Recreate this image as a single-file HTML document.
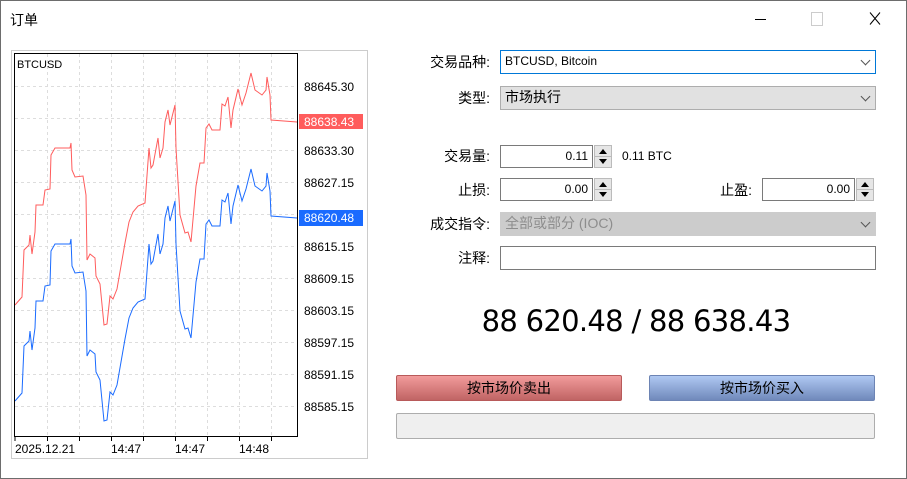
<!DOCTYPE html>
<html><head><meta charset="utf-8"><style>
body{margin:0;width:907px;height:479px;background:#fff;position:relative;overflow:hidden;font-family:"Liberation Sans","Noto Sans CJK SC",sans-serif;font-size:13px;color:#000}
.a{position:absolute}
.lbl{position:absolute;text-align:right;width:100px;font-size:14px}
.fld{position:absolute;box-sizing:border-box;border:1px solid #7a7a7a;background:#fff;font-size:12px;line-height:21px;padding:0 4px}
.num{text-align:right}
.dd::after{content:"";position:absolute;right:6px;top:6px;width:6px;height:6px;border-right:1px solid #555;border-bottom:1px solid #555;transform:rotate(45deg)}
.sp{position:absolute;width:18px;height:23px;box-sizing:border-box;border:1px solid #bbb;background:#e6e6e6}
.sp i{position:absolute;left:4px;width:0;height:0;border-left:4px solid transparent;border-right:4px solid transparent}
.sp .u{top:3px;border-bottom:5px solid #000}
.sp .d{bottom:3px;border-top:5px solid #000}
.sp b{position:absolute;left:0;right:0;top:10px;border-top:1px solid #bbb}
</style></head><body>
<div class="a" style="left:0;top:0;width:905px;height:477px;border:1px solid #6d6d6d"></div>
<div class="a" style="left:10px;top:10px;font-size:14px">订单</div>
<div class="a" style="left:755px;top:19px;width:11px;border-top:1px solid #000"></div>
<div class="a" style="left:811px;top:12px;width:10px;height:12px;border:1px solid #ccc"></div>
<svg class="a" style="left:869px;top:12px" width="12" height="13"><path d="M1 0.5L11 12.5M11 0.5L1 12.5" stroke="#000" stroke-width="1"/></svg>

<svg class="a" style="left:11px;top:50px" width="357" height="409">
<rect x="0.5" y="0.5" width="356" height="408" fill="#fff" stroke="#ccc"/>
<g stroke="#ddd" stroke-dasharray="3,3">
<line x1="4" y1="36.5" x2="286" y2="36.5"/><line x1="4" y1="68.5" x2="286" y2="68.5"/><line x1="4" y1="100.5" x2="286" y2="100.5"/><line x1="4" y1="132.5" x2="286" y2="132.5"/><line x1="4" y1="164.5" x2="286" y2="164.5"/><line x1="4" y1="196.5" x2="286" y2="196.5"/><line x1="4" y1="228.5" x2="286" y2="228.5"/><line x1="4" y1="260.5" x2="286" y2="260.5"/><line x1="4" y1="292.5" x2="286" y2="292.5"/><line x1="4" y1="324.5" x2="286" y2="324.5"/><line x1="4" y1="356.5" x2="286" y2="356.5"/>
<line x1="36.5" y1="4" x2="36.5" y2="386"/><line x1="68.5" y1="4" x2="68.5" y2="386"/><line x1="100.5" y1="4" x2="100.5" y2="386"/><line x1="132.5" y1="4" x2="132.5" y2="386"/><line x1="164.5" y1="4" x2="164.5" y2="386"/><line x1="196.5" y1="4" x2="196.5" y2="386"/><line x1="228.5" y1="4" x2="228.5" y2="386"/><line x1="260.5" y1="4" x2="260.5" y2="386"/>
</g>
<g transform="translate(-11,-50)" fill="none">
<polyline stroke="#ff5c5c" points="15,305 22,297 24,250 29,245 30,235 32,254 35,232 36,205 43,205 45,190 50,189 51,155 55,148 70,148 71,143 72,170 75,177 83,176 86,195 87,260 90,254 95,258 96,276 100,284 104,325 107,324 110,296 113,299 117,289 125,243 129,222 133,212 138,206 145,203 149,148 151,168 153,165 158,138 160,158 163,148 165,122 168,110 170,125 175,105 176,148 180,215 185,233 188,232 191,242 196,186 200,163 204,163 206,128 209,124 212,130 220,130 222,104 225,106 228,97 231,128 233,110 238,89 242,105 246,93 251,73 255,90 262,95 266,90 267,77 270,95 271,120 297,122"/>
<polyline stroke="#1a6bff" transform="translate(0,96)" points="15,305 22,297 24,250 29,245 30,235 32,254 35,232 36,205 43,205 45,190 50,189 51,155 55,148 70,148 71,143 72,170 75,177 83,176 86,195 87,260 90,254 95,258 96,276 100,284 104,325 107,324 110,296 113,299 117,289 125,243 129,222 133,212 138,206 145,203 149,148 151,168 153,165 158,138 160,158 163,148 165,122 168,110 170,125 175,105 176,148 180,215 185,233 188,232 191,242 196,186 200,163 204,163 206,128 209,124 212,130 220,130 222,104 225,106 228,97 231,128 233,110 238,89 242,105 246,93 251,73 255,90 262,95 266,90 267,77 270,95 271,120 297,122"/>
</g>
<rect x="3.5" y="3.5" width="283" height="383" fill="none" stroke="#000"/>
<g stroke="#000"><line x1="4" y1="387" x2="4" y2="391"/><line x1="36.5" y1="387" x2="36.5" y2="391"/><line x1="68.5" y1="387" x2="68.5" y2="391"/><line x1="100.5" y1="387" x2="100.5" y2="391"/><line x1="132.5" y1="387" x2="132.5" y2="391"/><line x1="164.5" y1="387" x2="164.5" y2="391"/><line x1="196.5" y1="387" x2="196.5" y2="391"/><line x1="228.5" y1="387" x2="228.5" y2="391"/><line x1="260.5" y1="387" x2="260.5" y2="391"/></g>
<g font-size="12" font-family="Liberation Sans, sans-serif" fill="#000">
<text x="6" y="18" font-size="11">BTCUSD</text>
<text x="293" y="41">88645.30</text><text x="293" y="105">88633.30</text><text x="293" y="137">88627.15</text><text x="293" y="201">88615.15</text><text x="293" y="233">88609.15</text><text x="293" y="265">88603.15</text><text x="293" y="297">88597.15</text><text x="293" y="329">88591.15</text><text x="293" y="361">88585.15</text>
<text x="4" y="403">2025.12.21</text><text x="100" y="403">14:47</text><text x="164" y="403">14:47</text><text x="228" y="403">14:48</text>
</g>
<rect x="288" y="64" width="64" height="15" fill="#ff5c5c"/><text x="293" y="76" fill="#fff" font-size="12" font-family="Liberation Sans">88638.43</text>
<rect x="288" y="160" width="64" height="16" fill="#1a6bff"/><text x="293" y="172" fill="#fff" font-size="12" font-family="Liberation Sans">88620.48</text>
</svg>

<div class="lbl" style="left:390px;top:52px">交易品种:</div>
<div class="fld dd" style="left:500px;top:50px;width:376px;height:24px;border-color:#0078d7">BTCUSD, Bitcoin</div>
<div class="lbl" style="left:390px;top:88px">类型:</div>
<div class="fld dd" style="left:500px;top:86px;width:376px;height:24px;background:#e1e1e1;border-color:#adadad;font-size:14px">市场执行</div>
<div class="lbl" style="left:390px;top:146px">交易量:</div>
<div class="fld num" style="left:500px;top:145px;width:93px;height:23px">0.11</div>
<div class="sp" style="left:594px;top:145px"><i class="u"></i><b></b><i class="d"></i></div>
<div class="a" style="left:622px;top:149px;font-size:12px">0.11 BTC</div>
<div class="lbl" style="left:390px;top:180px">止损:</div>
<div class="fld num" style="left:500px;top:178px;width:93px;height:23px">0.00</div>
<div class="sp" style="left:594px;top:178px"><i class="u"></i><b></b><i class="d"></i></div>
<div class="lbl" style="left:652px;top:180px">止盈:</div>
<div class="fld num" style="left:762px;top:178px;width:93px;height:23px">0.00</div>
<div class="sp" style="left:856px;top:178px"><i class="u"></i><b></b><i class="d"></i></div>
<div class="lbl" style="left:390px;top:214px">成交指令:</div>
<div class="fld dd" style="left:500px;top:212px;width:376px;height:24px;background:#cccccc;border-color:#cccccc;color:#8d8d8d;font-size:14px">全部或部分 (IOC)</div>
<div class="lbl" style="left:390px;top:248px">注释:</div>
<div class="fld" style="left:500px;top:246px;width:376px;height:24px"></div>

<div class="a" style="left:397px;top:304px;width:478px;text-align:center;font-size:29px;font-family:'DejaVu Sans',sans-serif;letter-spacing:-0.7px">88 620.48 / 88 638.43</div>
<div class="a" style="left:396px;top:375px;width:226px;height:26px;box-sizing:border-box;border:1px solid #b85a5a;border-radius:2px;background:linear-gradient(#f29b9b,#c06464);text-align:center;line-height:24px;font-size:14px">按市场价卖出</div>
<div class="a" style="left:649px;top:375px;width:226px;height:26px;box-sizing:border-box;border:1px solid #6d84b4;border-radius:2px;background:linear-gradient(#afc8f2,#7089bb);text-align:center;line-height:24px;font-size:14px">按市场价买入</div>
<div class="a" style="left:396px;top:413px;width:479px;height:26px;box-sizing:border-box;border:1px solid #adadad;border-radius:2px;background:#efefef"></div>
</body></html>
